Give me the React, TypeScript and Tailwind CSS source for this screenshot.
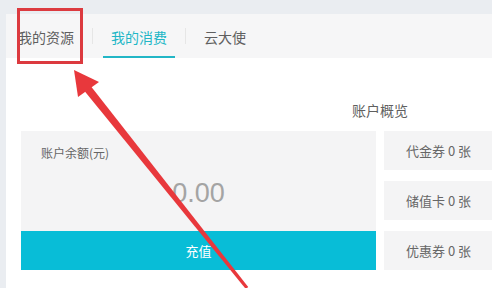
import * as React from "react"

const FONT = { fontFamily: '"Noto Sans CJK SC", "Microsoft YaHei", sans-serif' }

const TABS = ["我的资源", "我的消费", "云大使"]
const VOUCHERS = ["代金券 0 张", "储值卡 0 张", "优惠券 0 张"]

export default function App() {
  return (
    <div className="relative h-[288px] w-[492px] overflow-hidden bg-[#eaedf1] pl-[6px] pt-[14px]" style={FONT}>
      <div className="h-full w-[600px] bg-white">
        {/* Tabs */}
        <div className="flex h-[44px] items-stretch bg-[#f6f6f7] pl-[4px]">
          {TABS.map((tab, i) => (
            <React.Fragment key={tab}>
              {i > 0 ? <div className="mx-[10px] h-[16px] w-px self-center bg-[#e6e6e6]" /> : null}
              <div
                className={
                  i === 1
                    ? "flex items-center border-b-2 border-[#22b6c6] px-2 pt-[4px] text-[14px] text-[#22b6c6]"
                    : "flex items-center border-b-2 border-transparent px-2 pt-[4px] text-[14px] text-[#5f5f5f]"
                }
              >
                {tab}
              </div>
            </React.Fragment>
          ))}
        </div>

        {/* Account overview */}
        <div className="px-[15px]">
          <div className="mt-[42px] mb-[11px] pl-[331px] text-[14px] leading-[20px] text-[#5f5f5f]">账户概览</div>

          <div className="flex gap-[8px]">
            <div className="flex w-[355px] flex-col">
              <div className="flex h-[100px] flex-col bg-[#f4f4f5]">
                <div className="pl-[20px] pt-[14px] text-[12px] leading-[16px] text-[#666]">账户余额(元)</div>
                <div
                  className="mt-[14px] text-center text-[27px] leading-[36px] text-[#a4a4a4]"
                  style={{ fontFamily: '"Liberation Sans", Arial, sans-serif' }}
                >
                  0.00
                </div>
              </div>
              <button type="button" className="h-[39px] w-full bg-[#08bdd7] text-[13px] text-white">
                充值
              </button>
            </div>

            <div className="flex w-[130px] flex-col gap-[11px]">
              {VOUCHERS.map((v) => (
                <div key={v} className="flex h-[39px] items-center bg-[#f4f4f5] pl-[22px] text-[13px] text-[#666]">
                  {v}
                </div>
              ))}
            </div>
          </div>
        </div>
      </div>

      {/* Annotation overlay */}
      <div className="pointer-events-none absolute left-[17px] top-[8px] h-[56px] w-[66px] border-[3px] border-[#dc3a3f]" />
      <svg className="pointer-events-none absolute left-0 top-0" width="492" height="288" viewBox="0 0 492 288">
        <polygon points="74,70 78,97 99,82" fill="#e8383c" />
        <polygon points="84.9,91.5 91.1,86.5 248.2,287 245.8,289" fill="#e8383c" />
      </svg>
    </div>
  )
}
